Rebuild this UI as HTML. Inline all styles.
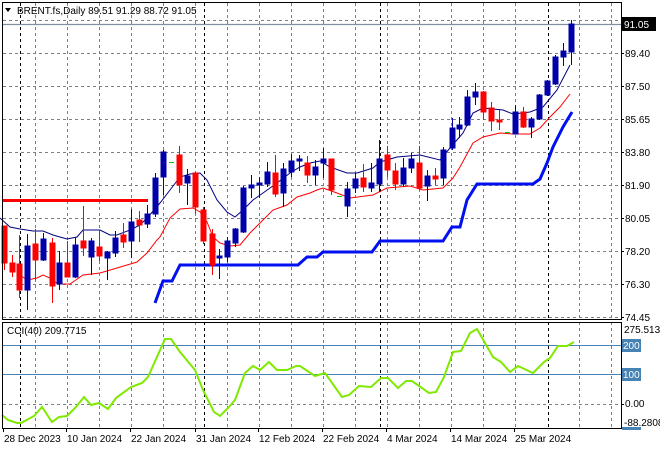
<!DOCTYPE html>
<html><head><meta charset="utf-8"><style>
html,body{margin:0;padding:0;background:#fff;}
svg{display:block;}
text{font-family:"Liberation Sans",sans-serif;font-size:10px;fill:#000;}
</style></head><body>
<svg width="660" height="450" viewBox="0 0 660 450" xmlns="http://www.w3.org/2000/svg">
<rect width="660" height="450" fill="#fff"/>
<!-- main grid -->
<g stroke="#778088" stroke-width="1" stroke-dasharray="3,3" fill="none">
<path d="M3 20.5H621M3 53.5H621M3 86.5H621M3 119.5H621M3 152.5H621M3 185.5H621M3 218.5H621M3 251.5H621M3 284.5H621M3 317.5H621"/>
<path d="M35.5 3V319M67.5 3V319M99.5 3V319M131.5 3V319M163.5 3V319M195.5 3V319M227.5 3V319M259.5 3V319M291.5 3V319M323.5 3V319M355.5 3V319M387.5 3V319M419.5 3V319M451.5 3V319M483.5 3V319M515.5 3V319M579.5 3V319M611.5 3V319"/>
<path d="M35.5 322V428M67.5 322V428M99.5 322V428M131.5 322V428M163.5 322V428M195.5 322V428M227.5 322V428M259.5 322V428M291.5 322V428M323.5 322V428M355.5 322V428M387.5 322V428M419.5 322V428M451.5 322V428M483.5 322V428M515.5 322V428M579.5 322V428M611.5 322V428M3 404.5H621"/>
</g>
<g stroke="#000" stroke-width="1" stroke-dasharray="3,3">
<path d="M20.5 3V319M204.5 3V319M380.5 3V319M548.5 3V319M20.5 322V428M204.5 322V428M380.5 322V428M548.5 322V428"/>
</g>
<!-- price line -->
<path d="M3 24.5H621" stroke="#8090a0" stroke-width="1.2"/>
<!-- red horizontal -->
<path d="M3 200.5H148" stroke="#f00" stroke-width="3"/>
<!-- blue step line -->
<polyline fill="none" stroke="#0010f0" stroke-width="3" points="155,303 163,281 172,281 180,265 298,265 307,257 317,257 323,252 372,252 380,241 443,241 452,227 460,227 467,200 477,184 533,184 540,179 547,163 553,147 563,127 572,112"/>
<!-- upper navy MA -->
<polyline fill="none" stroke="#000080" stroke-width="1" points="0,218 10,227 20,229 33,231 43,231 53,235 67,239 77,237 83,230 100,230 110,235 117,235 130,230 140,225 148,217 160,203 170,190 180,177 190,174 200,173 207,180 217,200 227,212 235,217 243,210 253,200 263,193 277,183 290,173 300,167 310,163 320,161 330,167 347,173 357,173 373,168 380,162 397,157 420,155 440,160 450,148 463,133 473,113 483,108 503,110 513,114 530,112 543,107 557,90 570,65"/>
<!-- lower red MA -->
<polyline fill="none" stroke="#f00" stroke-width="1" points="20,275 27,280 37,278 43,275 50,278 58,284 70,284 83,275 100,273 117,268 127,265 137,262 147,253 157,240 160,237 170,218 180,209 193,208 200,212 207,222 213,237 220,243 230,246 240,245 250,233 260,223 273,210 287,205 297,197 310,193 317,190 323,188 337,193 350,198 373,195 387,188 410,186 423,190 443,188 453,178 460,167 473,143 483,137 500,133 513,134 530,134 540,128 550,117 560,107 570,94"/>
<!-- candles -->
<g id="c" stroke-width="1">
<g stroke="#f00" fill="#f00"><path d="M4.5 226V270M12.5 255V277M19.5 235V298M35.5 229V280M52.5 238V303M67.5 241V277M83.5 206V256M99.5 230V261M123.5 223V248M139.5 211V242M179.5 146V193M195.5 172V214M203.5 207V244M212.5 229V275M275.5 155V197M307.5 156V183M331.5 159V195M363.5 164V192M387.5 146V177M395.5 163V190M419.5 146V190M435.5 168V185M483.5 91V120M491.5 102V131M499.5 110V130M523.5 107V128"/>
<rect x="2" y="226" width="5" height="37"/><rect x="10" y="263" width="5" height="9"/><rect x="17" y="264" width="5" height="26"/><rect x="33" y="244" width="5" height="16"/><rect x="50" y="243" width="5" height="43"/><rect x="65" y="263" width="5" height="14"/><rect x="81" y="241" width="5" height="7"/><rect x="97" y="247" width="5" height="9"/><rect x="121" y="235" width="5" height="7"/><rect x="137" y="220" width="5" height="5"/><rect x="177" y="155" width="5" height="30"/><rect x="193" y="173" width="5" height="34"/><rect x="201" y="210" width="5" height="31"/><rect x="210" y="234" width="5" height="31"/><rect x="273" y="173" width="5" height="21"/><rect x="305" y="163" width="5" height="12"/><rect x="329" y="159" width="5" height="31"/><rect x="361" y="178" width="5" height="9"/><rect x="385" y="155" width="5" height="15"/><rect x="393" y="171" width="5" height="13"/><rect x="417" y="163" width="5" height="25"/><rect x="433" y="176" width="5" height="3"/><rect x="481" y="92" width="5" height="20"/><rect x="489" y="108" width="5" height="13"/><rect x="497" y="120" width="5" height="2"/><rect x="521" y="112" width="5" height="15"/></g>
<g stroke="#0000a8" fill="#0000a8"><path d="M27.5 234V310M43.5 233V261M59.5 251V290M75.5 237V278M91.5 238V275M107.5 251V280M115.5 231V257M131.5 209V258M147.5 205V228M155.5 173V217M163.5 150V195M187.5 169V205M219.5 249V279M227.5 237V262M235.5 228V247M243.5 186V233M251.5 175V198M259.5 177V198M267.5 162V187M283.5 163V207M291.5 154V177M299.5 155V171M315.5 160V185M323.5 148V178M347.5 182V217M355.5 173V193M371.5 163V192M379.5 140V192M403.5 158V187M411.5 153V173M427.5 170V201M443.5 147V185M452.5 118V150M459.5 117V138M467.5 90V126M475.5 83V105M515.5 105V134M531.5 117V138M539.5 94V120M547.5 80V96M555.5 55V85M563.5 43V66M571.5 20V65"/>
<rect x="25" y="246" width="5" height="44"/><rect x="41" y="239" width="5" height="21"/><rect x="57" y="263" width="5" height="21"/><rect x="73" y="245" width="5" height="32"/><rect x="89" y="241" width="5" height="16"/><rect x="105" y="252" width="5" height="6"/><rect x="113" y="238" width="5" height="15"/><rect x="129" y="222" width="5" height="19"/><rect x="145" y="214" width="5" height="10"/><rect x="153" y="178" width="5" height="36"/><rect x="161" y="152" width="5" height="25"/><rect x="185" y="176" width="5" height="7"/><rect x="217" y="256" width="5" height="2"/><rect x="225" y="241" width="5" height="16"/><rect x="233" y="229" width="5" height="14"/><rect x="241" y="188" width="5" height="44"/><rect x="249" y="185" width="5" height="3"/><rect x="257" y="183" width="5" height="2"/><rect x="265" y="172" width="5" height="12"/><rect x="281" y="169" width="5" height="24"/><rect x="289" y="161" width="5" height="11"/><rect x="297" y="159" width="5" height="2"/><rect x="313" y="167" width="5" height="8"/><rect x="321" y="159" width="5" height="4"/><rect x="345" y="189" width="5" height="17"/><rect x="353" y="179" width="5" height="9"/><rect x="369" y="183" width="5" height="5"/><rect x="377" y="159" width="5" height="25"/><rect x="401" y="168" width="5" height="16"/><rect x="409" y="159" width="5" height="9"/><rect x="425" y="176" width="5" height="10"/><rect x="441" y="150" width="5" height="28"/><rect x="450" y="128" width="5" height="20"/><rect x="457" y="125" width="5" height="4"/><rect x="465" y="97" width="5" height="28"/><rect x="473" y="92" width="5" height="5"/><rect x="513" y="112" width="5" height="22"/><rect x="529" y="119" width="5" height="8"/><rect x="537" y="95" width="5" height="24"/><rect x="545" y="81" width="5" height="14"/><rect x="553" y="57" width="5" height="27"/><rect x="561" y="51" width="5" height="6"/><rect x="569" y="24" width="5" height="28"/></g>
<path d="M169 162.5H174M337 196.5H342M505 132.5H510" stroke="#0c0"/>
</g>
<!-- CCI levels -->
<path d="M3 345.5H621M3 374.5H621" stroke="#4682b4" stroke-width="1"/>
<polyline fill="none" stroke="#7fea00" stroke-width="2" points="2,415 8,420 17,423 21,423 34,416 42,407 52,422 59,417 67,416 76,407 84,397 91,405 99,403 108,409 116,398 131,387 142,383 148,377 165,339 171,339 180,352 195,370 203,390 214,412 220,416 228,408 235,400 245,373 253,366 260,370 269,362 277,370 287,370 296,366 300,366 315,376 325,373 342,397 349,395 359,386 371,387 381,378 388,378 398,388 406,381 412,381 429,393 436,392 444,377 453,352 461,351 470,333 477,329 493,357 501,362 510,372 518,366 533,373 544,362 550,358 558,346 567,346 574,342"/>
<!-- frames -->
<rect x="2.5" y="2.5" width="619" height="317" fill="none" stroke="#000"/>
<rect x="2.5" y="322.5" width="619" height="106" fill="none" stroke="#000"/>
<!-- header -->
<path d="M5 8H11L8 12Z" fill="#000"/>
<text x="17" y="14">BRENT.fs,Daily  89.51 91.29 88.72 91.05</text>
<text x="7" y="334">CCI(40) 209.7715</text>
<!-- right axis -->
<g stroke="#000"><path d="M621 20.5h3M621 53.5h3M621 86.5h3M621 119.5h3M621 152.5h3M621 185.5h3M621 218.5h3M621 251.5h3M621 284.5h3M621 317.5h3M621 345.5h3M621 374.5h3M621 404.5h3"/></g>
<text x="625" y="24">91.25</text>
<rect x="622" y="17" width="34" height="14" fill="#000"/>
<text x="624" y="28" style="fill:#fff">91.05</text>
<text x="625" y="57">89.40</text>
<text x="625" y="90">87.50</text>
<text x="625" y="123">85.65</text>
<text x="625" y="156">83.80</text>
<text x="625" y="189">81.90</text>
<text x="625" y="222">80.05</text>
<text x="625" y="255">78.20</text>
<text x="625" y="288">76.30</text>
<text x="625" y="321">74.45</text>
<text x="624" y="333">275.5131</text>
<rect x="622" y="339" width="19" height="13" fill="#4682b4"/>
<text x="623" y="349" style="fill:#fff">200</text>
<rect x="622" y="368" width="19" height="13" fill="#4682b4"/>
<text x="623" y="378" style="fill:#fff">100</text>
<text x="625" y="407">0.00</text>
<rect x="622" y="427" width="19" height="3" fill="#4682b4"/>
<text x="624" y="426">-88.2808</text>
<!-- date ticks and labels -->
<g stroke="#000"><path d="M3.5 428v4M66.5 428v4M130.5 428v4M195.5 428v4M258.5 428v4M322.5 428v4M386.5 428v4M450.5 428v4M514.5 428v4"/></g>
<text x="4" y="442">28 Dec 2023</text>
<text x="67" y="442">10 Jan 2024</text>
<text x="131" y="442">22 Jan 2024</text>
<text x="196" y="442">31 Jan 2024</text>
<text x="259" y="442">12 Feb 2024</text>
<text x="323" y="442">22 Feb 2024</text>
<text x="387" y="442">4 Mar 2024</text>
<text x="451" y="442">14 Mar 2024</text>
<text x="515" y="442">25 Mar 2024</text>
</svg>
</body></html>
